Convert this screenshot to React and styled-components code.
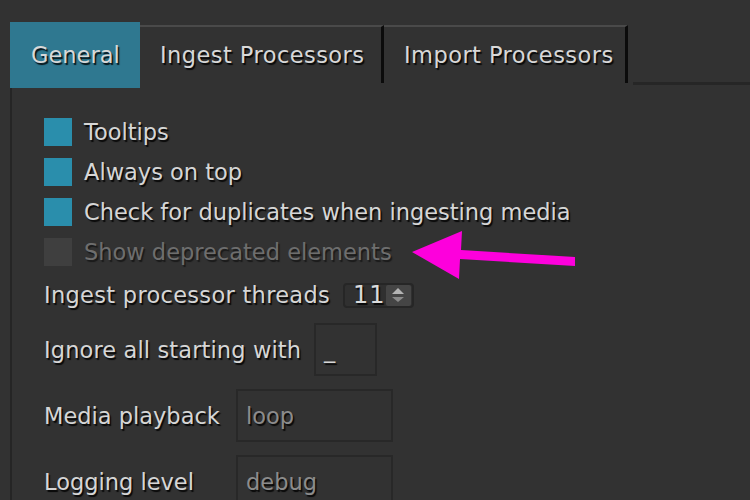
import React from 'react';
import styled, { createGlobalStyle } from 'styled-components';

const Global = createGlobalStyle`
    html, body {
        margin: 0;
        padding: 0;
        background: #323232;
        overflow: hidden;
    }
    * {
        box-sizing: border-box;
    }
`;

const App = () => {
    return (
        <Page>
            <Global />
            <TabBar>
                <Tab active>General</Tab>
                <Tab>Ingest Processors</Tab>
                <Tab>Import Processors</Tab>
                <TabFiller />
            </TabBar>
            <Panel>
                <CheckRow>
                    <Box checked />
                    <Label>Tooltips</Label>
                </CheckRow>
                <CheckRow>
                    <Box checked />
                    <Label>Always on top</Label>
                </CheckRow>
                <CheckRow>
                    <Box checked />
                    <Label>Check for duplicates when ingesting media</Label>
                </CheckRow>
                <CheckRow>
                    <Box />
                    <Label disabled>Show deprecated elements</Label>
                </CheckRow>

                <FieldRow>
                    <Label spread={0.3}>Ingest processor threads</Label>
                    <Spin>
                        <SpinValue>11</SpinValue>
                        <SpinButton>
                            <svg width="14" height="16" viewBox="0 0 14 16">
                                <path d="M7 1 L13 7 L1 7 Z" fill="#b4b4b4" />
                                <path d="M1 10 L13 10 L7 15 Z" fill="#8a8a8a" />
                            </svg>
                        </SpinButton>
                    </Spin>
                </FieldRow>

                <FieldRow tall>
                    <Label spread={0.12}>Ignore all starting with</Label>
                    <Input w={63}>_</Input>
                </FieldRow>

                <FormGrid>
                    <Label>Media playback</Label>
                    <Input w={157} dim>loop</Input>
                    <Label>Logging level</Label>
                    <Input w={157} dim>debug</Input>
                </FormGrid>
            </Panel>

            <Arrow width="180" height="60" viewBox="0 0 180 60">
                <polygon
                    points="2,24 52,3 51,22 165,29 165,38 50,31 49,51"
                    fill="#fd00dc"
                />
            </Arrow>
        </Page>
    );
};

export default App;

const Page = styled.div`
    position: relative;
    width: 750px;
    height: 500px;
    padding: 22px 0 0 10px;
    font-family: "DejaVu Sans", Verdana, sans-serif;
    font-size: 22.5px;
    color: #d6d6d6;
    text-shadow: 1.5px 1.5px 1px rgba(0, 0, 0, 0.85);
`;

const TabBar = styled.div`
    display: flex;
    align-items: flex-start;
`;

const Tab = styled.div`
    display: flex;
    align-items: center;
    padding: 0 0 0 ${p => (p.active ? 21 : 20)}px;
    white-space: nowrap;
    width: ${p => (p.active ? 130 : 244)}px;
    height: ${p => (p.active ? 66 : 58)}px;
    margin-top: ${p => (p.active ? 0 : 3)}px;
    letter-spacing: ${p => (p.active ? 0 : 0.45)}px;
    background: ${p => (p.active ? '#2f7890' : '#323232')};
    border-top: ${p => (p.active ? 'none' : '2px solid #4a4a4a')};
    border-right: ${p => (p.active ? 'none' : '3px solid #0b0b0b')};
    color: #d8d8d8;
`;

const TabFiller = styled.div`
    flex: 1;
    margin-left: 5px;
    height: 63px;
    border-bottom: 3px solid #262626;
`;

const Panel = styled.div`
    display: flex;
    flex-direction: column;
    border-left: 2px solid #252525;
    padding: 24px 0 0 32px;
    height: 420px;
`;

const CheckRow = styled.div`
    display: flex;
    align-items: center;
    gap: 12px;
    height: 40px;
`;

const Box = styled.div`
    width: 28px;
    height: 28px;
    background: ${p => (p.checked ? '#2a8eac' : '#3f3f3f')};
`;

const Label = styled.span`
    white-space: nowrap;
    letter-spacing: ${p => p.spread || 0}px;
    color: ${p => (p.disabled ? '#6e6e6e' : '#d6d6d6')};
    text-shadow: ${p => (p.disabled ? '1.5px 1.5px 1px rgba(0,0,0,0.5)' : 'inherit')};
`;

const FieldRow = styled.div`
    display: flex;
    align-items: center;
    gap: 13px;
    margin-top: ${p => (p.tall ? 15 : 10)}px;
`;

const Spin = styled.div`
    display: flex;
    align-items: center;
    width: 71px;
    height: 25px;
    border: 2px solid #262626;
    border-radius: 4px;
    background: #303030;
    padding: 0 1px 0 8px;
`;

const SpinValue = styled.span`
    flex: 1;
    color: #dadada;
    font-size: 24px;
    letter-spacing: 1px;
    line-height: 1;
`;

const SpinButton = styled.div`
    display: flex;
    align-items: center;
    justify-content: center;
    width: 27px;
    height: 21px;
    background: #454545;
    border-radius: 2px;
`;

const Input = styled.div`
    display: flex;
    align-items: center;
    width: ${p => p.w}px;
    height: 53px;
    border: 2px solid #282828;
    padding: 0 8px;
    color: ${p => (p.dim ? '#8c8c8c' : '#d6d6d6')};
`;

const FormGrid = styled.div`
    display: grid;
    grid-template-columns: 192px 157px;
    row-gap: 13px;
    align-items: center;
    margin-top: 13px;
`;

const Arrow = styled.svg`
    position: absolute;
    left: 410px;
    top: 228px;
`;
